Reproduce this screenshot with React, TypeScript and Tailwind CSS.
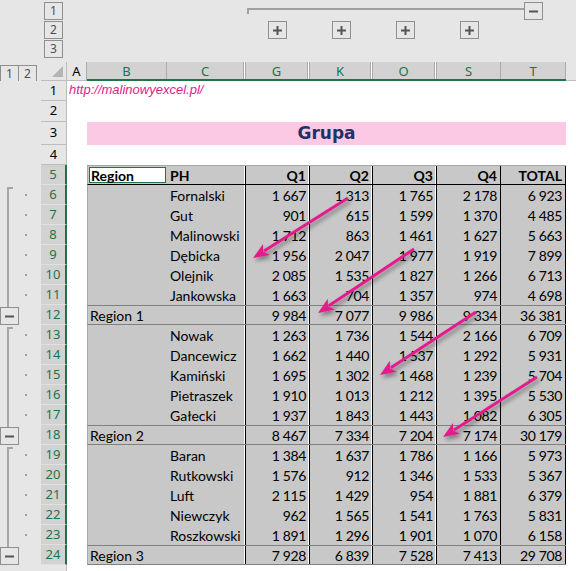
import React from "react";
import clsx from "clsx";

type Vals = number[];

const groups: { label: string; sum: Vals; rows: [string, Vals][] }[] = [
  {
    label: "Region 1",
    sum: [9984, 7077, 9986, 9334, 36381],
    rows: [
      ["Fornalski", [1667, 1313, 1765, 2178, 6923]],
      ["Gut", [901, 615, 1599, 1370, 4485]],
      ["Malinowski", [1712, 863, 1461, 1627, 5663]],
      ["Dębicka", [1956, 2047, 1977, 1919, 7899]],
      ["Olejnik", [2085, 1535, 1827, 1266, 6713]],
      ["Jankowska", [1663, 704, 1357, 974, 4698]],
    ],
  },
  {
    label: "Region 2",
    sum: [8467, 7334, 7204, 7174, 30179],
    rows: [
      ["Nowak", [1263, 1736, 1544, 2166, 6709]],
      ["Dancewicz", [1662, 1440, 1537, 1292, 5931]],
      ["Kamiński", [1695, 1302, 1468, 1239, 5704]],
      ["Pietraszek", [1910, 1013, 1212, 1395, 5530]],
      ["Gałecki", [1937, 1843, 1443, 1082, 6305]],
    ],
  },
  {
    label: "Region 3",
    sum: [7928, 6839, 7528, 7413, 29708],
    rows: [
      ["Baran", [1384, 1637, 1786, 1166, 5973]],
      ["Rutkowski", [1576, 912, 1346, 1533, 5367]],
      ["Luft", [2115, 1429, 954, 1881, 6379]],
      ["Niewczyk", [962, 1565, 1541, 1763, 5831]],
      ["Roszkowski", [1891, 1296, 1901, 1070, 6158]],
    ],
  },
];

// column widths of G, K, O, S, T and their right edges
const numW = ["w-[64px]", "w-[63px]", "w-[64px]", "w-[64px]", "w-[65px]"];
const numB = [
  "border-r border-black shadow-[inset_-1px_0_0_#ffffff]",
  "border-r border-black shadow-[inset_-1px_0_0_#ffffff]",
  "border-r border-black shadow-[inset_-1px_0_0_#ffffff]",
  "border-r border-black",
  "border-r border-black",
];

function fmt(n: number) {
  if (n < 1000) return String(n);
  return `${Math.floor(n / 1000)}\u00a0${String(n % 1000).padStart(3, "0")}`;
}

function Box({ children, className }: { children: React.ReactNode; className?: string }) {
  return (
    <div
      className={clsx(
        "flex h-[18px] w-[19px] shrink-0 items-center justify-center border border-[#8f8f8f] font-['Noto_Sans',sans-serif] text-[12px] leading-none text-[#505050]",
        className
      )}
    >
      {children}
    </div>
  );
}

const Plus = () => (
  <svg width="9" height="9" viewBox="0 0 9 9">
    <path d="M0 4.5H9M4.5 0V9" stroke="#555" strokeWidth="2" />
  </svg>
);
const Minus = () => (
  <svg width="9" height="9" viewBox="0 0 9 9">
    <path d="M0 4.5H9" stroke="#555" strokeWidth="2" />
  </svg>
);

function RowHead({ n, selected }: { n: number; selected?: boolean }) {
  return (
    <div
      className={clsx(
        "flex w-[26px] shrink-0 items-center justify-center font-['Noto_Sans',sans-serif] text-[13px]",
        selected
          ? "border-b border-r-2 border-b-[#e0e0e0] border-r-[#217346] bg-[#d2d2d2] text-[#217346]"
          : "border-b border-r border-[#bdbdbd] bg-[#e6e6e6] text-black"
      )}
    >
      {n}
    </div>
  );
}

function Arrow({ x1, y1, x2, y2 }: { x1: number; y1: number; x2: number; y2: number }) {
  const dx = x2 - x1;
  const dy = y2 - y1;
  const L = Math.hypot(dx, dy);
  const ux = dx / L;
  const uy = dy / L;
  const hl = 16;
  const hw = 6.5;
  const bx = x2 - ux * hl;
  const by = y2 - uy * hl;
  const px = -uy;
  const py = ux;
  return (
    <g filter="url(#sh)">
      <line x1={x1} y1={y1} x2={bx + ux * 3} y2={by + uy * 3} stroke="#e31c8d" strokeWidth="3" />
      <polygon
        points={`${x2},${y2} ${bx + px * hw},${by + py * hw} ${bx + ux * 4},${by + uy * 4} ${bx - px * hw},${by - py * hw}`}
        fill="#e31c8d"
      />
    </g>
  );
}

function Gutter({ kind, first }: { kind: "detail" | "sum" | "none"; first?: boolean }) {
  if (kind === "none") return <div className="w-[41px] shrink-0 bg-[#e6e6e6]" />;
  if (kind === "sum")
    return (
      <div className="flex w-[41px] shrink-0 flex-col bg-[#e6e6e6]">
        <div className="ml-[7px] h-[2px] w-[2px] bg-[#a6a6a6]" />
        <Box>
          <Minus />
        </Box>
      </div>
    );
  return (
    <div className="flex w-[41px] shrink-0 bg-[#e6e6e6]">
      <div className="flex w-[20px] pl-[7px]">
        {first ? (
          <div className="mt-[2px] w-[6px] border-l-2 border-t-2 border-[#a6a6a6]" />
        ) : (
          <div className="w-[2px] bg-[#a6a6a6]" />
        )}
      </div>
      <div className="flex flex-1 items-center pl-[5px]">
        <div className="h-[2px] w-[2px] bg-[#a0a0a0]" />
      </div>
    </div>
  );
}

export default function App() {
  let n = 6;
  const body: React.ReactNode[] = [];
  groups.forEach((g) => {
    g.rows.forEach(([name, v], i) => {
      const r = n++;
      body.push(
        <div key={r} className="flex h-[20px]">
          <Gutter kind="detail" first={i === 0} />
          <RowHead n={r} selected />
          <div className="w-[20px] shrink-0" />
          <div className="flex w-[479px] shrink-0 border-l border-[#a6a6a6] bg-[#c8c8c8]">
            <div className="w-[79px] shrink-0" />
            <div className="flex w-[79px] shrink-0 items-center border-r border-black pl-[3px] shadow-[inset_-1px_0_0_#ffffff]">
              {name}
            </div>
            {v.map((x, j) => (
              <div
                key={j}
                className={clsx("flex shrink-0 items-center justify-end pr-[3px] tracking-[-0.35px]", numW[j], numB[j])}
              >
                {fmt(x)}
              </div>
            ))}
          </div>
          <div className="flex-1" />
        </div>
      );
    });
    const r = n++;
    body.push(
      <div key={r} className="flex h-[20px]">
        <Gutter kind="sum" />
        <RowHead n={r} selected />
        <div className="w-[20px] shrink-0" />
        <div className="flex w-[479px] shrink-0 border-y border-l border-y-[#808080] border-l-[#a6a6a6] bg-[#c8c8c8]">
          <div className="flex w-[158px] shrink-0 items-center border-r border-black pl-[2px] shadow-[inset_-1px_0_0_#ffffff]">
            {g.label}
          </div>
          {g.sum.map((x, j) => (
            <div
              key={j}
              className={clsx("flex shrink-0 items-center justify-end pr-[3px] tracking-[-0.35px]", numW[j], numB[j])}
            >
              {fmt(x)}
            </div>
          ))}
        </div>
        <div className="flex-1" />
      </div>
    );
  });

  const colHead = (label: string, w: string, sep: "one" | "two", sel = true) => (
    <div
      className={clsx(
        "flex shrink-0",
        w,
        sel ? "border-b-2 border-[#217346] bg-[#d2d2d2] text-[#217346]" : "border-b border-[#bdbdbd] bg-[#e6e6e6] text-black"
      )}
    >
      <div className="flex flex-1 items-center justify-center pt-[2px]">{label}</div>
      {sep === "one" ? (
        <div className="w-px bg-[#ababab]" />
      ) : (
        <div className="w-[3px] border-x border-[#ababab] bg-white" />
      )}
    </div>
  );

  return (
    <div className="relative h-[571px] w-[576px] overflow-hidden bg-white font-[Lato,sans-serif] text-[14px] text-black">
      {/* column outline area */}
      <div className="flex h-[62px] flex-col bg-[#e6e6e6] pt-[2px]">
        <div className="flex h-[19px]">
          <div className="w-[44px] shrink-0" />
          <Box>1</Box>
          <div className="w-[184px] shrink-0" />
          <div className="mt-[6px] h-[6px] w-[277px] shrink-0 border-l-2 border-t-2 border-[#a0a0a0]" />
          <Box>
            <Minus />
          </Box>
        </div>
        <div className="flex h-[19px]">
          <div className="w-[44px] shrink-0" />
          <Box>2</Box>
          <div className="w-[205px] shrink-0" />
          <Box>
            <Plus />
          </Box>
          <div className="w-[45px] shrink-0" />
          <Box>
            <Plus />
          </Box>
          <div className="w-[45px] shrink-0" />
          <Box>
            <Plus />
          </Box>
          <div className="w-[45px] shrink-0" />
          <Box>
            <Plus />
          </Box>
        </div>
        <div className="flex h-[19px]">
          <div className="w-[44px] shrink-0" />
          <Box>3</Box>
        </div>
      </div>

      {/* column headers */}
      <div className="flex h-[19px] bg-[#e6e6e6] font-['Noto_Sans',sans-serif] text-[13px]">
        <div className="flex w-[41px] shrink-0 pt-[3px]">
          <Box className="h-[16px]">1</Box>
          <Box className="-ml-px h-[16px]">2</Box>
        </div>
        <div className="flex w-[26px] shrink-0 items-end justify-end border-b border-r border-[#bdbdbd] pb-[3px] pr-[3px]">
          <svg width="11" height="11" viewBox="0 0 11 11">
            <polygon points="0,11 11,11 11,0" fill="#b4b4b4" />
          </svg>
        </div>
        {colHead("A", "w-[20px]", "one", false)}
        {colHead("B", "w-[80px]", "one")}
        {colHead("C", "w-[79px]", "two")}
        {colHead("G", "w-[64px]", "two")}
        {colHead("K", "w-[63px]", "two")}
        {colHead("O", "w-[64px]", "two")}
        {colHead("S", "w-[64px]", "one")}
        {colHead("T", "w-[65px]", "one")}
        <div className="flex-1 border-b border-[#bdbdbd]" />
      </div>

      {/* rows 1-4 */}
      <div className="flex h-[20px]">
        <Gutter kind="none" />
        <RowHead n={1} />
        <div className="flex flex-1 items-center pb-[2px] pl-[2px] font-['Liberation_Sans',sans-serif] text-[13px] italic text-[#e0218a]">
          http://malinowyexcel.pl/
        </div>
      </div>
      <div className="flex h-[21px]">
        <Gutter kind="none" />
        <RowHead n={2} />
        <div className="flex-1" />
      </div>
      <div className="flex h-[23px]">
        <Gutter kind="none" />
        <RowHead n={3} />
        <div className="w-[20px] shrink-0" />
        <div className="flex w-[479px] shrink-0 items-center justify-center bg-[#fbc9e4] font-['DejaVu_Sans',sans-serif] text-[17px] font-bold text-[#1f3167]">
          Grupa
        </div>
        <div className="flex-1" />
      </div>
      <div className="flex h-[20px]">
        <Gutter kind="none" />
        <RowHead n={4} />
        <div className="flex-1" />
      </div>

      {/* header row 5 */}
      <div className="flex h-[20px]">
        <Gutter kind="none" />
        <RowHead n={5} selected />
        <div className="w-[20px] shrink-0" />
        <div className="flex w-[479px] shrink-0 border-y border-l border-b-black border-l-[#a6a6a6] border-t-[#a6a6a6] bg-[#c8c8c8] font-bold">
          <div className="flex w-[79px] shrink-0 p-[1px]">
            <div className="flex flex-1 items-center border border-[#217346] bg-white pl-[1px]">Region</div>
          </div>
          <div className="flex w-[79px] shrink-0 items-center border-r border-black pl-[3px] shadow-[inset_-1px_0_0_#ffffff]">
            PH
          </div>
          {["Q1", "Q2", "Q3", "Q4", "TOTAL"].map((q, j) => (
            <div key={q} className={clsx("flex shrink-0 items-center justify-end pr-[3px]", numW[j], numB[j])}>
              {q}
            </div>
          ))}
        </div>
        <div className="flex-1" />
      </div>

      {body}

      <div className="flex h-[6px]">
        <Gutter kind="none" />
        <div className="w-[26px] shrink-0 border-r border-[#bdbdbd] bg-[#e6e6e6]" />
        <div className="flex-1" />
      </div>

      {/* annotation arrows */}
      <svg className="pointer-events-none absolute left-0 top-0" width="576" height="571">
        <defs>
          <filter id="sh" x="-20%" y="-20%" width="140%" height="140%">
            <feDropShadow dx="2" dy="3" stdDeviation="2" floodColor="#000" floodOpacity="0.4" />
          </filter>
        </defs>
        <Arrow x1={348} y1={198} x2={253} y2={258} />
        <Arrow x1={414} y1={249} x2={318} y2={313} />
        <Arrow x1={476} y1={312} x2={380} y2={375} />
        <Arrow x1={537} y1={377} x2={443} y2={437} />
      </svg>
    </div>
  );
}
